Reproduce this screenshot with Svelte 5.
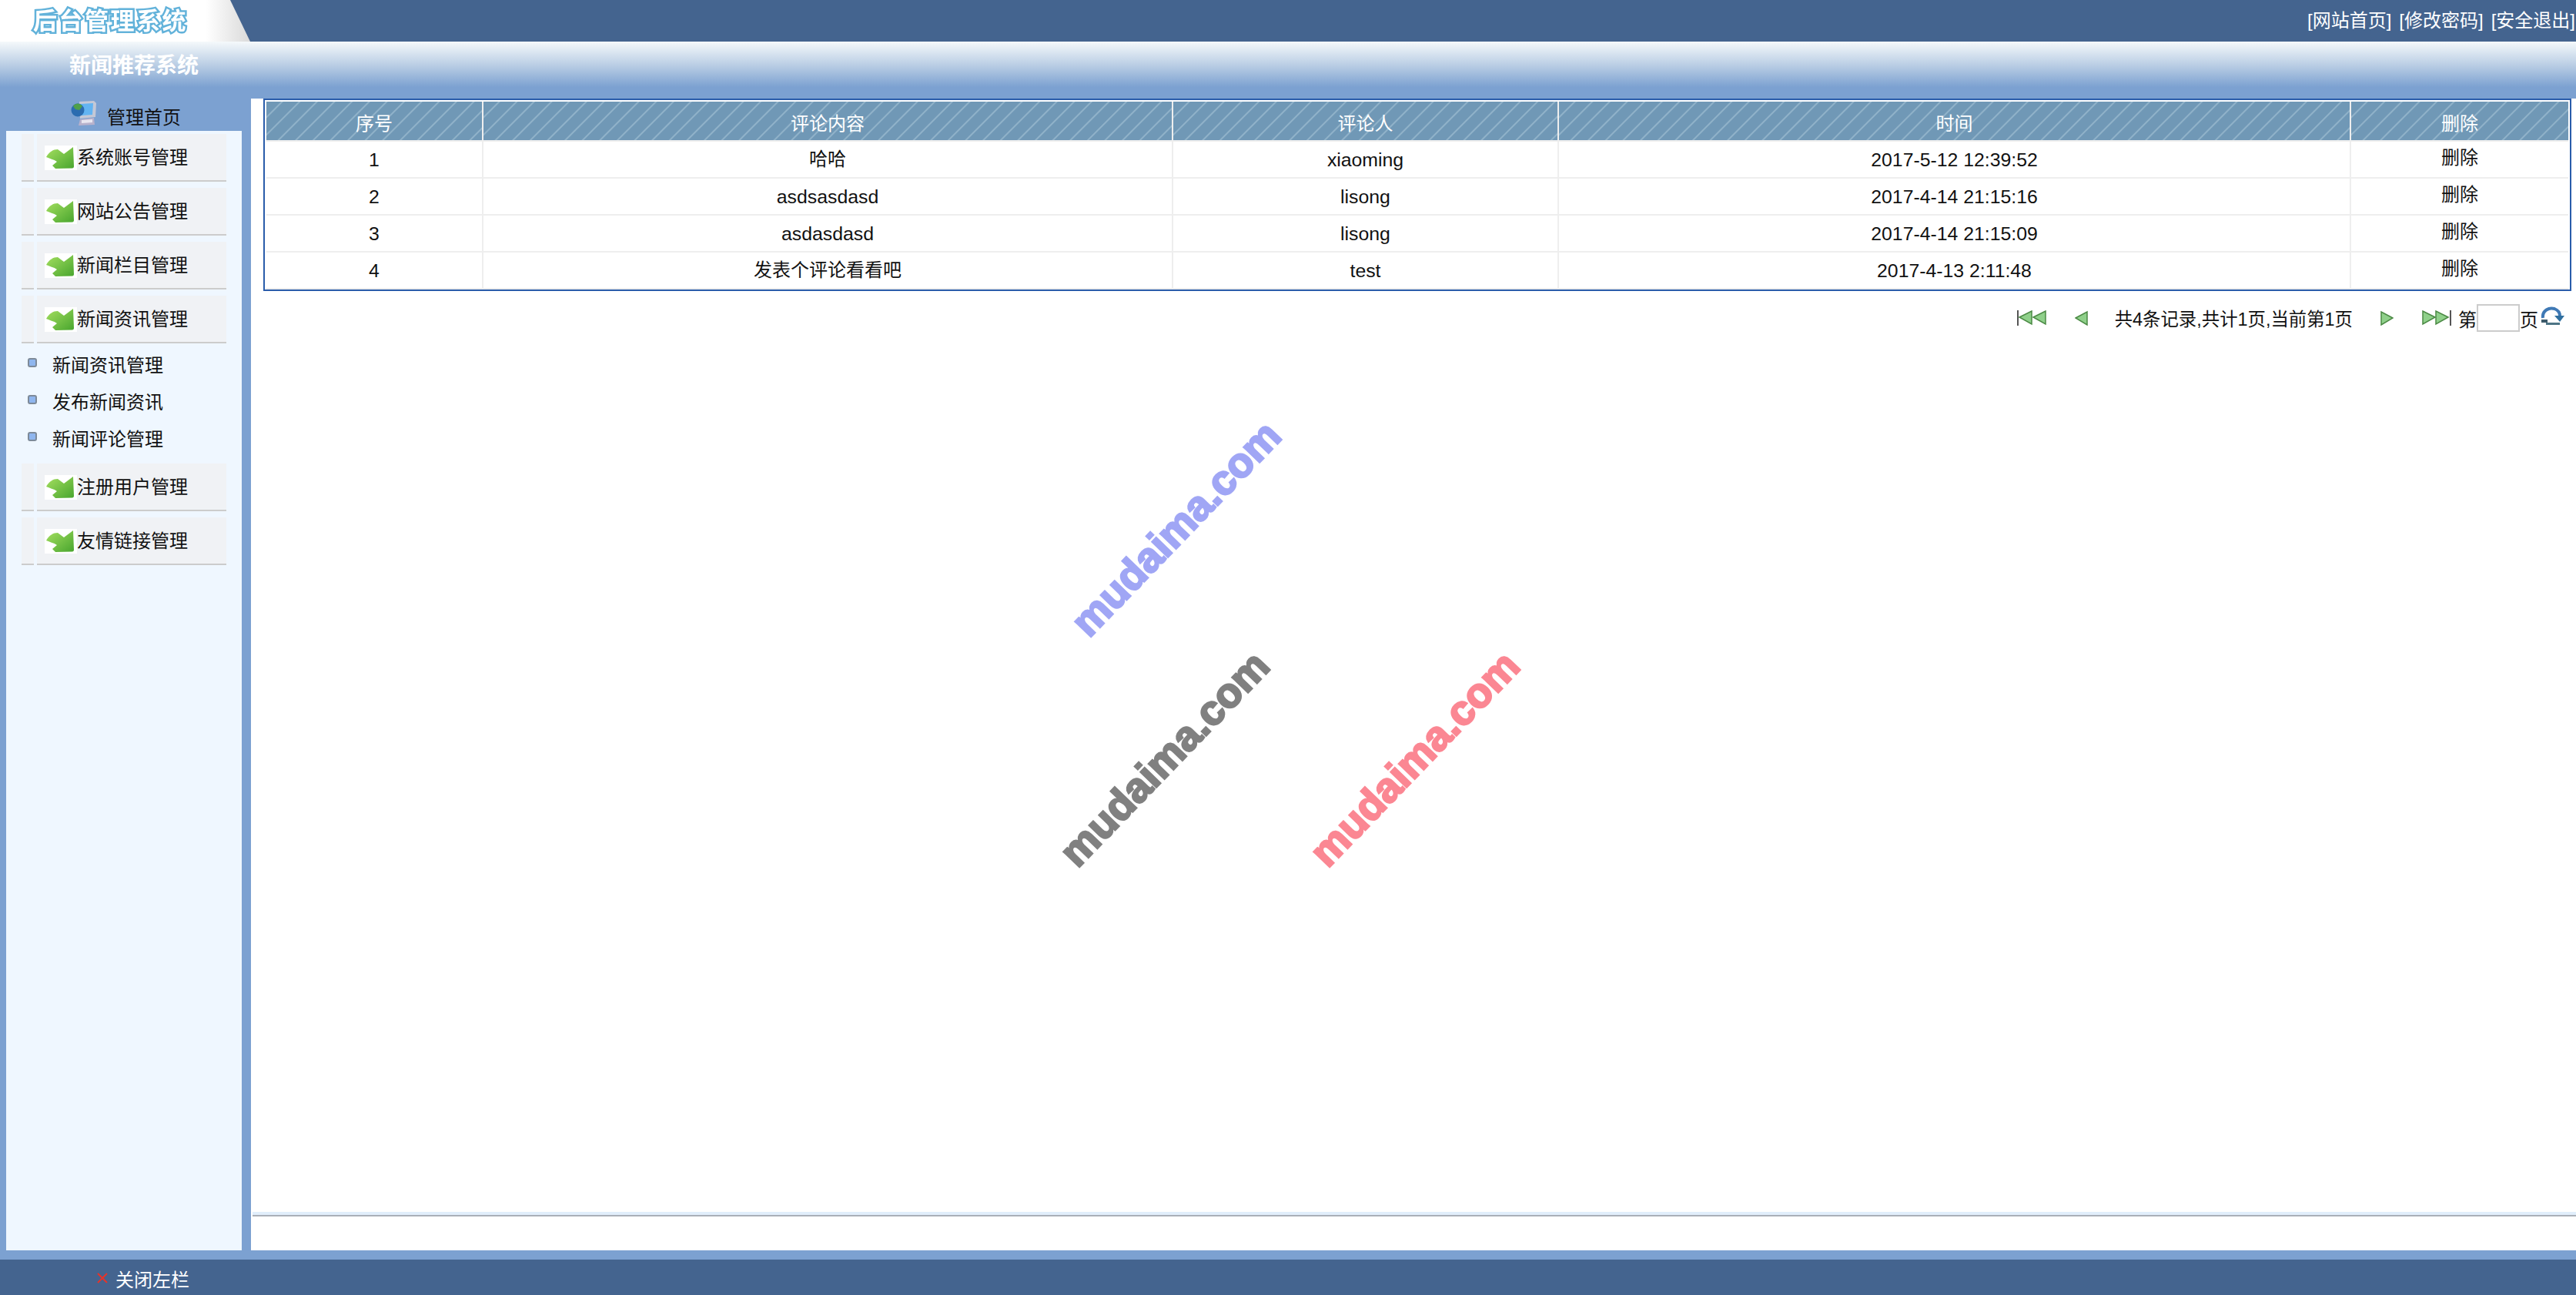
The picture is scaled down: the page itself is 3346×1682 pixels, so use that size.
<script lang="ts">
  const groups = [
    { title: '系统账号管理', subs: [] },
    { title: '网站公告管理', subs: [] },
    { title: '新闻栏目管理', subs: [] },
    { title: '新闻资讯管理', subs: ['新闻资讯管理', '发布新闻资讯', '新闻评论管理'] },
    { title: '注册用户管理', subs: [] },
    { title: '友情链接管理', subs: [] }
  ];

  const comments = [
    { id: 1, text: '哈哈', user: 'xiaoming', time: '2017-5-12 12:39:52' },
    { id: 2, text: 'asdsasdasd', user: 'lisong', time: '2017-4-14 21:15:16' },
    { id: 3, text: 'asdasdasd', user: 'lisong', time: '2017-4-14 21:15:09' },
    { id: 4, text: '发表个评论看看吧', user: 'test', time: '2017-4-13 2:11:48' }
  ];

  const isCjk = (s: string) => /[^\x00-\x7f]/.test(s);
</script>

<div class="page">
  <header class="top">
    <div class="logo"><span class="logo__text">后台管理系统</span></div>
    <nav class="top__links">
      <a href="#home">[网站首页]</a>
      <a href="#pwd">[修改密码]</a>
      <a href="#exit">[安全退出]</a>
    </nav>
  </header>

  <div class="band">新闻推荐系统</div>

  <div class="body">
    <aside class="side">
      <div class="side__home">
        <svg class="home-icon" width="34" height="33" viewBox="0 0 34 33">
          <path d="M11 2 L30 1 L33 4 L32 22 L12 24 Z" fill="#c4c8d6" />
          <path d="M13 5 L29 4 L28 19 L14 20 Z" fill="#63b4f2" />
          <path d="M12 25 L30 23 L31 32 L10 33 Z" fill="#b8b2cc" />
          <path d="M14 26 L28 25 L28 29 L14 30 Z" fill="#e8e6f0" />
          <circle cx="9" cy="13" r="8.5" fill="#2b6cb0" />
          <path d="M3 8 C7 3 12 4 15 8 L11 13 L6 12 Z" fill="#4fa04a" />
        </svg>
        <span>管理首页</span>
      </div>
      <div class="side__panel">
        {#each groups as group (group.title)}
          <div class="group">
            <div class="item">
              <div class="item__strip"></div>
              <div class="item__main">
                <svg class="arrow" width="42" height="32" viewBox="0 0 42 32">
                  <defs>
                    <linearGradient id={'g' + group.title} x1="0" y1="0" x2="1" y2="1">
                      <stop offset="0" stop-color="#a6e060" />
                      <stop offset="1" stop-color="#48a52e" />
                    </linearGradient>
                  </defs>
                  <rect width="42" height="32" fill="#fff" />
                  <path d="M2 15 C6 8 11 5 17 5 L25 11 L37 2 L38 27 C38 29 37 29 36 29.5 L14 30 L10 26 L16 21 C12 18 6 17 2 15 Z" fill={'url(#g' + group.title + ')'} />
                </svg>
                <span class="item__label">{group.title}</span>
              </div>
            </div>
            {#if group.subs.length}
              <ul class="subs">
                {#each group.subs as sub (sub)}
                  <li><i class="bullet"></i><span class="subs__label">{sub}</span></li>
                {/each}
              </ul>
            {/if}
          </div>
        {/each}
      </div>
    </aside>

    <main class="main">
      <div class="tbl">
        <table>
          <colgroup>
            <col style="width:282px" />
            <col style="width:896px" />
            <col style="width:501px" />
            <col style="width:1029px" />
            <col />
          </colgroup>
          <thead>
            <tr>
              <th>序号</th>
              <th>评论内容</th>
              <th>评论人</th>
              <th>时间</th>
              <th>删除</th>
            </tr>
          </thead>
          <tbody>
            {#each comments as c (c.id)}
              <tr>
                <td>{c.id}</td>
                <td class:cjk={isCjk(c.text)}>{c.text}</td>
                <td>{c.user}</td>
                <td>{c.time}</td>
                <td class="cjk"><a class="del" href="#del">删除</a></td>
              </tr>
            {/each}
          </tbody>
        </table>
      </div>

      <div class="pager">
        <svg class="pg pg--first" width="38" height="20" viewBox="0 0 38 20">
          <rect x="0" y="0" width="2" height="20" fill="#555" />
          <path d="M3 9 L19 1 L19 18 Z" fill="#8fd08a" stroke="#4c8a45" stroke-width="1.5" />
          <path d="M21 9 L37 1 L37 18 Z" fill="#8fd08a" stroke="#4c8a45" stroke-width="1.5" />
        </svg>
        <svg class="pg pg--prev" width="17" height="20" viewBox="0 0 17 20">
          <path d="M1 10 L16 2 L16 19 Z" fill="#8fd08a" stroke="#4c8a45" stroke-width="1.5" />
        </svg>
        <span class="pg__text">共4条记录,共计1页,当前第1页</span>
        <svg class="pg pg--next" width="18" height="20" viewBox="0 0 18 20">
          <path d="M17 10 L2 2 L2 19 Z" fill="#8fd08a" stroke="#4c8a45" stroke-width="1.5" />
        </svg>
        <svg class="pg pg--last" width="40" height="20" viewBox="0 0 40 20">
          <path d="M18 9 L2 1 L2 18 Z" fill="#8fd08a" stroke="#4c8a45" stroke-width="1.5" />
          <path d="M35 9 L19 1 L19 18 Z" fill="#8fd08a" stroke="#4c8a45" stroke-width="1.5" />
          <rect x="37" y="0" width="2" height="20" fill="#555" />
        </svg>
        <span class="pg__label">第</span>
        <input class="pg__input" type="text" />
        <span class="pg__label">页</span>
        <svg class="pg pg--reload" width="32" height="26" viewBox="0 0 32 26">
          <path d="M4 16 C3 6 12 2 19 4 C24 6 26 9 26 13" fill="none" stroke="#3f79b5" stroke-width="4" />
          <path d="M19 13 L32 13 L26 21 Z" fill="#2f6f9f" />
          <path d="M2 18 L10 18 L10 22 L2 22 Z" fill="#3d5a6a" />
          <path d="M8 22 L26 22 L26 25 L8 25 Z" fill="#4d7585" />
        </svg>
      </div>

      <div class="main__spacer"></div>
      <div class="main__rule"></div>
    </main>
  </div>

  <footer class="foot">
    <svg class="foot__x" width="14" height="14" viewBox="0 0 14 14">
      <path d="M1 1 L13 13 M13 1 L1 13" stroke="#e5342a" stroke-width="2" />
    </svg>
    <span>关闭左栏</span>
  </footer>

  <span class="wm wm--blue">mudaima.com</span>
  <span class="wm wm--gray">mudaima.com</span>
  <span class="wm wm--pink">mudaima.com</span>
</div>

<style>
  :global(body) {
    margin: 0;
    background: #fff;
  }

  .page {
    position: relative;
    height: 1682px;
    display: flex;
    flex-direction: column;
    overflow: hidden;
    font-family: "Liberation Sans", "Noto Sans CJK SC", sans-serif;
    font-size: 24px;
    color: #111;
  }

  .top {
    height: 54px;
    flex-shrink: 0;
    display: flex;
    justify-content: space-between;
    background: #44648f;
  }

  .logo {
    width: 326px;
    display: flex;
    align-items: center;
    padding: 0 0 5px 43px;
    box-sizing: border-box;
    background: linear-gradient(to right, #fff 82%, #d9d9d9 100%);
    clip-path: polygon(0 0, 299px 0, 325px 54px, 0 54px);
  }

  .logo__text {
    font-family: "Noto Sans CJK SC", sans-serif;
    font-size: 31px;
    font-weight: 700;
    line-height: 1;
    letter-spacing: 2.5px;
    color: #fff;
    -webkit-text-stroke: 5px #62b2da;
    paint-order: stroke fill;
    filter: blur(0.5px);
  }

  .top__links {
    display: flex;
    align-items: center;
    gap: 8px;
    padding-bottom: 5px;
  }

  .top__links a {
    padding: 0 1px;
    color: #fff;
    text-decoration: none;
  }

  .band {
    height: 74px;
    flex-shrink: 0;
    box-sizing: border-box;
    padding: 12px 0 0 90px;
    background: linear-gradient(to bottom, #f5f9fb 0%, #b9cde4 42%, #7ca1d1 80%, #7ca1d1 100%);
    font-size: 28px;
    font-weight: 700;
    line-height: 40px;
    color: #fff;
  }

  .body {
    flex: 1;
    min-height: 0;
    display: flex;
    padding-bottom: 12px;
    background: #7ca1d1;
  }

  .side {
    width: 326px;
    flex-shrink: 0;
    display: flex;
    flex-direction: column;
  }

  .side__home {
    height: 42px;
    flex-shrink: 0;
    display: flex;
    padding-left: 92px;
    gap: 13px;
  }

  .side__home span {
    line-height: 34px;
    padding-top: 8px;
  }

  .home-icon {
    margin-top: 2px;
  }

  .side__panel {
    flex: 1;
    margin: 0 12px 0 8px;
    padding-top: 4px;
    background: #eff7ff;
  }

  .group {
    padding-bottom: 8px;
  }

  .item {
    display: flex;
    gap: 4px;
    margin-left: 20px;
    width: 266px;
    height: 62px;
  }

  .item__strip {
    width: 16px;
    background: #f0f2f5;
    border-bottom: 2px solid #ccc;
  }

  .item__main {
    flex: 1;
    display: flex;
    align-items: center;
    padding-left: 10px;
    background: #f0f2f5;
    border-bottom: 2px solid #ccc;
  }

  .item__label {
    padding-bottom: 4px;
  }

  .arrow {
    margin-top: 2px;
    flex-shrink: 0;
  }

  .subs {
    list-style: none;
    margin: 0;
    padding: 4px 0 0 0;
  }

  .subs li {
    height: 48px;
    display: flex;
    align-items: center;
    padding-left: 28px;
  }

  .subs__label {
    padding-bottom: 4px;
  }

  .bullet {
    width: 8px;
    height: 8px;
    margin: -6px 20px 0 0;
    border: 2px solid #7d8a99;
    border-radius: 3px;
    background: #8fb6ee;
  }

  .main {
    flex: 1;
    min-width: 0;
    display: flex;
    flex-direction: column;
    background: #fff;
  }

  .tbl {
    margin: 0 6px 0 16px;
    padding: 2px 2px 0;
    border: 2px solid #2a5caa;
  }

  table {
    width: 100%;
    table-layout: fixed;
    border-collapse: separate;
    border-spacing: 0;
  }

  th,
  td {
    padding: 0;
    text-align: center;
    border-right: 2px solid #eee;
    border-bottom: 2px solid #eee;
  }

  th:last-child,
  td:last-child {
    border-right: none;
  }

  th {
    height: 52px;
    box-sizing: border-box;
    padding-top: 2px;
    font-weight: 400;
    color: #fff;
    background: repeating-linear-gradient(
      135deg,
      #7098b6 0,
      #7098b6 13px,
      #90b2c9 14px,
      #90b2c9 15px,
      #7098b6 16px
    );
  }

  td {
    height: 48px;
    box-sizing: border-box;
    padding-top: 2px;
    font-size: 24.8px;
    line-height: 28px;
  }

  td.cjk {
    padding: 0 0 1px;
    font-size: 24px;
  }

  .del {
    position: relative;
    top: -2px;
    color: #111;
    text-decoration: none;
  }

  .pager {
    display: flex;
    align-items: center;
    justify-content: flex-end;
    padding: 17px 15px 0 0;
  }

  .pg {
    flex-shrink: 0;
  }

  .pg--first {
    margin-right: 37px;
  }

  .pg--prev {
    margin-right: 35px;
  }

  .pg__text {
    margin-right: 35px;
    font-size: 23.4px;
    white-space: nowrap;
  }

  .pg--next {
    margin-right: 36px;
  }

  .pg--last {
    margin-right: 8px;
  }

  .pg--reload {
    margin: -6px 0 0 2px;
  }

  .pg__input {
    width: 56px;
    height: 36px;
    box-sizing: border-box;
    padding: 0;
    border: 2px solid #ccc;
    background: #fff;
  }

  .main__spacer {
    flex: 1;
  }

  .main__rule {
    height: 4px;
    margin: 0 0 44px 2px;
    background: #e1eefb;
    border-bottom: 2px solid #aab0b8;
  }

  .foot {
    height: 46px;
    flex-shrink: 0;
    display: flex;
    align-items: center;
    padding: 2px 0 0 126px;
    box-sizing: border-box;
    gap: 10px;
    background: #44648f;
    color: #fff;
  }

  .wm {
    position: absolute;
    transform: translate(-50%, -50%) rotate(-46deg);
    font-size: 54px;
    font-weight: 700;
    line-height: 1;
    white-space: nowrap;
    -webkit-text-stroke: 2.5px currentColor;
  }

  .wm--blue {
    left: 1527px;
    top: 686px;
    color: #a0a6f5;
  }

  .wm--gray {
    left: 1512px;
    top: 985px;
    color: #808080;
  }

  .wm--pink {
    left: 1837px;
    top: 985px;
    color: #fb8793;
  }
</style>
